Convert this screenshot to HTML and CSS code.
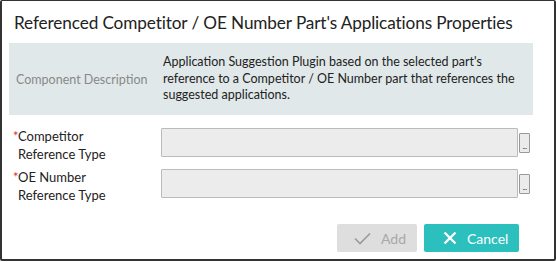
FILE: index.html
```html
<!DOCTYPE html>
<html>
<head>
<meta charset="utf-8">
<link rel="stylesheet" href="styles.css">
</head>
<body>
<div class="dialog">
  <h1 class="title">Referenced Competitor / OE Number Part's Applications Properties</h1>
  <div class="desc-panel">
    <div class="desc-label">Component Description</div>
    <div class="desc-text">Application Suggestion Plugin based on the selected part's reference to a Competitor / OE Number part that references the suggested applications.</div>
  </div>
  <div class="form">
    <div class="row">
      <label class="label"><span class="req">*</span>Competitor<br>Reference Type</label>
      <div class="field">
        <div class="input"></div>
        <button class="pick">...</button>
      </div>
    </div>
    <div class="row">
      <label class="label"><span class="req">*</span>OE Number<br>Reference Type</label>
      <div class="field">
        <div class="input"></div>
        <button class="pick">...</button>
      </div>
    </div>
  </div>
  <div class="actions">
    <button class="btn btn-add">
      <svg width="17" height="13" viewBox="0 0 17 13"><path d="M1 6.5 L6 11.5 L16 1.5" fill="none" stroke="#9a9a9a" stroke-width="1.6"/></svg>
      <span>Add</span>
    </button>
    <button class="btn btn-cancel">
      <svg width="14" height="14" viewBox="0 0 14 14"><path d="M1.5 1.5 L12.5 12.5 M12.5 1.5 L1.5 12.5" fill="none" stroke="#fff" stroke-width="2.4"/></svg>
      <span>Cancel</span>
    </button>
  </div>
</div>
</body>
</html>
```
FILE: styles.css
```css
html, body {
  margin: 0;
  padding: 0;
  background: #fff;
}
body {
  font-family: "Lato", "Open Sans", sans-serif;
  color: #222;
}
.dialog {
  box-sizing: border-box;
  width: 556px;
  height: 261px;
  border: 1px solid #333;
  border-left-width: 2px;
  border-right-width: 2px;
  border-bottom-width: 2px;
  border-radius: 2px;
  padding: 0 21px 0 7px;
  display: flex;
  flex-direction: column;
}
.title {
  margin: 0;
  padding: 9px 0 0 5px;
  height: 42px;
  box-sizing: border-box;
  font-weight: normal;
  font-size: 17.2px;
  letter-spacing: -0.12px;
  line-height: 25px;
  color: #222;
  white-space: nowrap;
}
.desc-panel {
  background: #e1e8ea;
  height: 72px;
  box-sizing: border-box;
  display: grid;
  grid-template-columns: 147px 1fr;
  align-items: center;
  padding: 0 8px 0 7px;
  font-size: 12.5px;
}
.desc-label {
  color: #888;
  font-size: 12.5px;
}
.desc-text {
  line-height: 16.5px;
  color: #222;
}
.form {
  margin-top: 13px;
  display: flex;
  flex-direction: column;
}
.row {
  display: grid;
  grid-template-columns: 152px 1fr;
  height: 41px;
  align-items: start;
}
.label {
  font-size: 13px;
  line-height: 18px;
  margin-top: -1px;
  padding-left: 9px;
  color: #222;
}
.req {
  color: #d9302c;
  margin-left: -5px;
  display: inline-block;
  width: 5px;
}
.field {
  display: flex;
  align-items: center;
  height: 29px;
  margin-right: 3px;
}
.input {
  flex: 1;
  height: 29px;
  box-sizing: border-box;
  background: #ececec;
  border: 1px solid #bbb;
  border-radius: 1px;
}
.pick {
  width: 11px;
  height: 20px;
  padding: 0 0 2px 0;
  margin: 0 0 0 1px;
  box-sizing: border-box;
  background: #ebebeb;
  border: 1px solid #999;
  border-radius: 1px;
  font-family: "Lato", sans-serif;
  font-size: 8px;
  line-height: 8px;
  color: #444;
  display: flex;
  align-items: flex-end;
  justify-content: center;
  letter-spacing: -0.5px;
}
.actions {
  margin-top: 14px;
  display: flex;
  justify-content: flex-end;
  gap: 7px;
  padding-right: 14px;
}
.btn {
  height: 28px;
  border: none;
  border-radius: 2px;
  display: flex;
  align-items: center;
  font-family: "Lato", sans-serif;
  font-size: 14px;
  padding: 0;
}
.btn-add {
  width: 80px;
  background: #dedede;
  color: #a8a8a8;
  padding-left: 17px;
  gap: 10px;
}
.btn-cancel {
  width: 95px;
  background: #2bbfbd;
  color: #fff;
  padding-left: 19px;
  gap: 10px;
}
```
